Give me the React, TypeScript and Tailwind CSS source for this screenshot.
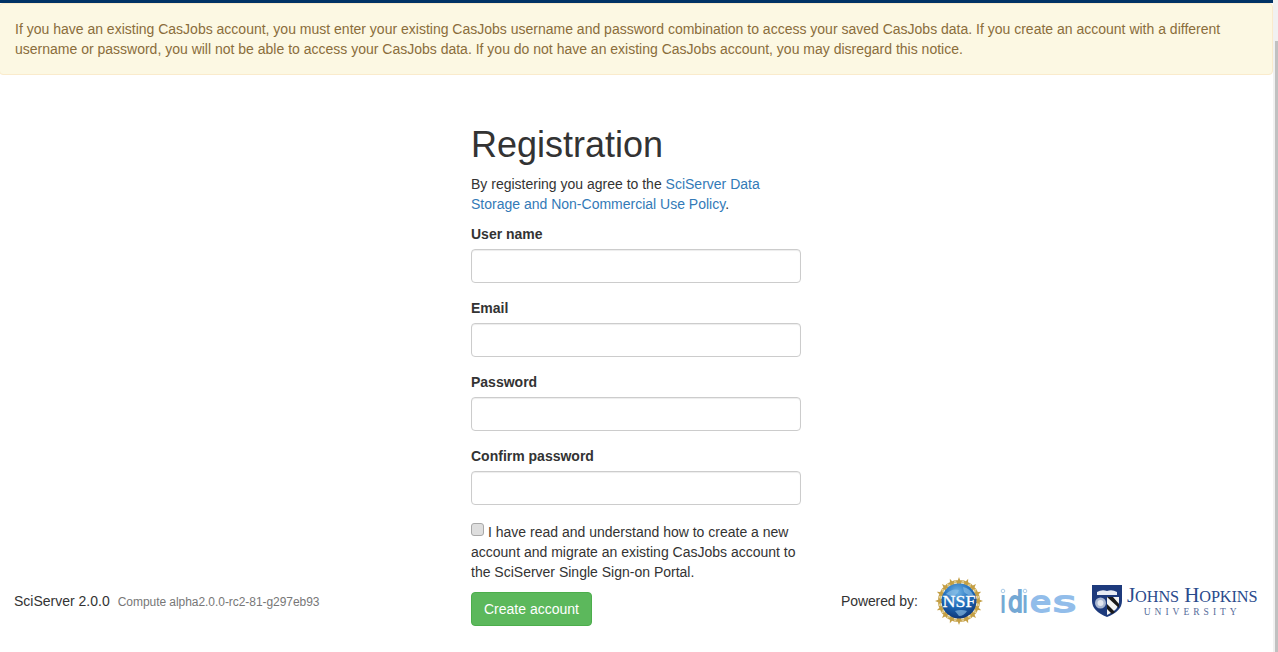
const arial = { fontFamily: '"Liberation Sans", Arial, sans-serif' };

function Field({ label }: { label: string }) {
  return (
    <div className="mb-[15px]">
      <label className="block mb-[5px] text-[14px] leading-[20px] font-bold text-[#333]">{label}</label>
      <input className="block w-full h-[34px] rounded-[4px] border border-[#ccc] bg-white shadow-[inset_0_1px_1px_rgba(0,0,0,0.075)]" />
    </div>
  );
}

function NsfLogo() {
  const points = Array.from({ length: 16 }, (_, i) => (i * 360) / 16);
  return (
    <svg width="48" height="48" viewBox="0 0 48 48">
      <defs>
        <radialGradient id="globe" cx="45%" cy="25%" r="80%">
          <stop offset="0%" stopColor="#6fb2e4" />
          <stop offset="50%" stopColor="#1f6cbb" />
          <stop offset="100%" stopColor="#0c2f6e" />
        </radialGradient>
      </defs>
      <circle cx="24" cy="24" r="19" fill="none" stroke="#d8c078" strokeWidth="2" />
      {points.map((a) => (
        <polygon
          key={a}
          points="24,0 25.2,3.2 28.4,3.2 25.8,5.2 26.8,8.4 24,6.4 21.2,8.4 22.2,5.2 19.6,3.2 22.8,3.2"
          fill="#c49f45"
          transform={`rotate(${a} 24 24)`}
        />
      ))}
      <circle cx="24" cy="24" r="17.5" fill="url(#globe)" />
      <path d="M11 17 q6 -6 13 -4 q-2 6 -8 6 z M28 10 q7 1 11 9 q-6 0 -10 -4 z M20 34 q6 -2 12 0 q-3 5 -8 5 z" fill="#8cc0e6" opacity="0.65" />
      <text x="24" y="30" textAnchor="middle" fontFamily="Liberation Serif" fontSize="17" textLength="33" lengthAdjust="spacingAndGlyphs" fill="#fff" stroke="#fff" strokeWidth="0.3">NSF</text>
    </svg>
  );
}

function IdiesLogo() {
  const letter = { fontFamily: 'DejaVu Sans', fontSize: 29, strokeWidth: 1.8, lengthAdjust: 'spacingAndGlyphs' as const };
  return (
    <svg width="78" height="26" viewBox="0 0 78 26" className="overflow-visible">
      <circle cx="3" cy="3" r="1.8" fill="none" stroke="#a9cbe8" strokeWidth="1" />
      <circle cx="25" cy="3" r="1.8" fill="none" stroke="#a9cbe8" strokeWidth="1" />
      <text x="0.5" y="24" textLength="5" fill="#74a8d4" stroke="#74a8d4" {...letter}>ı</text>
      <text x="8" y="24" textLength="15" fill="#74a8d4" stroke="#74a8d4" {...letter}>d</text>
      <text x="22.5" y="24" textLength="5" fill="#74a8d4" stroke="#74a8d4" {...letter}>ı</text>
      <text x="30" y="24" textLength="21" fill="#92bdea" stroke="#92bdea" {...letter}>e</text>
      <text x="53" y="24" textLength="23" fill="#92bdea" stroke="#92bdea" {...letter}>s</text>
    </svg>
  );
}

function JhuLogo() {
  return (
    <div className="flex items-center gap-[5px]">
      <svg width="30" height="32" viewBox="0 0 30 32">
        <path d="M0 0 H30 V16 Q30 26 15 32 Q0 26 0 16 Z" fill="#1d3a7c" />
        <path d="M5 7 Q10 4 15 6 Q20 4 25 7 V10 H5 Z" fill="#e8ecf4" />
        <circle cx="8.5" cy="18" r="5.5" fill="#a8b6d0" />
        <circle cx="8.5" cy="18" r="3" fill="#e2e6ee" />
        <path d="M15 12 H27 V17 Q27 24 17 29 L15 30 Z" fill="#f4f4f4" />
        <path d="M15 12 L21 12 L27 19 L27 23 Z M15 19 L23 27 L20 29 L15 24 Z" fill="#1a1a1a" />
      </svg>
      <div className="flex flex-col items-center text-[#2a4a8c]" style={{ fontFamily: '"Liberation Serif", serif' }}>
        <span className="text-[21px] leading-[20px] tracking-[-0.1px] whitespace-nowrap">
          J<span className="text-[16.3px]">OHNS</span> H<span className="text-[16.3px]">OPKINS</span>
        </span>
        <span className="text-[9.5px] leading-[10px] tracking-[4px] text-[#566c9a]">UNIVERSITY</span>
      </div>
    </div>
  );
}

export default function App() {
  return (
    <div className="relative h-[652px] overflow-hidden bg-white text-[14px] leading-[20px] text-[#333]" style={arial}>
      <div className="mr-[5px]">
        <div className="h-[3px] bg-[#003366]" />

        {/* Notice */}
        <div className="-ml-px h-[72px] rounded-[4px] border border-[#faebcc] bg-[#fcf8e3] p-[15px] text-[#8a6d3b]">
          If you have an existing CasJobs account, you must enter your existing CasJobs username and password combination to access your saved CasJobs data. If you create an account with a different username or password, you will not be able to access your CasJobs data. If you do not have an existing CasJobs account, you may disregard this notice.
        </div>

        {/* Form */}
        <div className="ml-[471px] w-[330px] pt-[50px]">
          <h1 className="text-[36px] leading-[40px] text-[#333] mb-[9px]">Registration</h1>
          <p className="mb-[10px]">
            By registering you agree to the <a className="text-[#337ab7]">SciServer Data Storage and Non-Commercial Use Policy</a>.
          </p>
          <Field label="User name" />
          <Field label="Email" />
          <Field label="Password" />
          <Field label="Confirm password" />
          <div className="mt-[17px] mb-[10px]">
            <input type="checkbox" className="mr-[4px] inline-block h-[13px] w-[13px] appearance-none rounded-[3px] border border-[#a8a8a8] bg-[#dedede] align-[1px]" />
            I have read and understand how to create a new account and migrate an existing CasJobs account to the SciServer Single Sign-on Portal.
          </div>
          <button className="h-[34px] rounded-[4px] border border-[#4cae4c] bg-[#5cb85c] px-[12px] text-white">Create account</button>
        </div>
      </div>

      {/* Fixed footer */}
      <div className="absolute left-[14px] top-[591px] flex items-baseline">
        <span>SciServer 2.0.0</span>
        <span className="ml-[8px] text-[12px] tracking-[-0.05px] text-[#777]">Compute alpha2.0.0-rc2-81-g297eb93</span>
      </div>
      <div className="absolute left-[841px] top-[577px] flex h-[48px] items-center">
        <span className="mr-[17px] w-[77px] whitespace-nowrap tracking-[-0.1px]">Powered by:</span>
        <NsfLogo />
        <div className="ml-[17px] mr-[14px]"><IdiesLogo /></div>
        <JhuLogo />
      </div>

      {/* Scrollbar */}
      <div className="absolute right-0 top-0 bottom-0 w-[5px] bg-[#f1f1f1]">
        <div className="absolute left-[2px] right-0 top-[41px] bottom-0 bg-[#c1c1c1]" />
      </div>
    </div>
  );
}
